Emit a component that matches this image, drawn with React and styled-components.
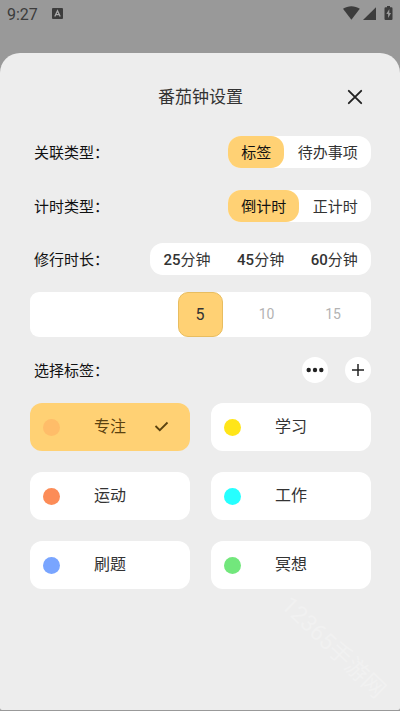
import { useState } from "react";
import styled, { createGlobalStyle } from "styled-components";

const GlobalStyle = createGlobalStyle`
  * {
    box-sizing: border-box;
  }
  body {
    margin: 0;
    background: #999;
    font-family: Roboto, "Noto Sans CJK SC", sans-serif;
    color: #333;
  }
  button {
    font: inherit;
    color: inherit;
    border: 0;
    padding: 0;
    background: none;
    cursor: pointer;
  }
`;
const Screen = styled.div`
  position: relative;
  display: flex;
  flex-direction: column;
  width: 400px;
  height: 711px;
  overflow: hidden;
  background: #999;
  padding-bottom: 1px;
`;
const StatusBar = styled.div`
  display: flex;
  align-items: flex-start;
  height: 53px;
  flex-shrink: 0;
  padding: 5px 6px 0 7px;
  color: #3c3c3c;
`;
const Time = styled.span`
  width: 45px;
  padding-top: 1px;
  font-size: 16px;
  line-height: 18px;
`;
const InputBadge = styled.svg`
  margin-top: 3px;
`;
const StatusIcons = styled.div`
  display: flex;
  margin-left: auto;
`;
const Sheet = styled.div`
  flex: 1;
  background: #ededed;
  border-radius: 20px 20px 2px 2px;
  padding: 27px 29px 0 30px;
`;
const Header = styled.div`
  display: grid;
  grid-template-columns: 1fr auto 1fr;
  align-items: center;
  height: 32px;
  margin-bottom: 24px;
`;
const Title = styled.h1`
  grid-column: 2;
  margin: 0;
  font-size: 17px;
  line-height: 34px;
  font-weight: 400;
`;
const CloseButton = styled.button`
  display: flex;
  justify-self: end;
  height: 16px;
  margin: -1px 8px 0 0;
`;
const Row = styled.div`
  display: flex;
  align-items: center;
  justify-content: space-between;
  height: 32px;
  margin-bottom: ${(props) => props.$gap || 21}px;
`;
const Label = styled.div`
  padding: 2px 0 0 4px;
  font-size: 15px;
  line-height: 32px;
  color: #111;
`;
const Segments = styled.div`
  display: flex;
  height: 32px;
  background: #fff;
  border-radius: 13px;
`;
const Segment = styled.button`
  height: 32px;
  padding: 0 13.25px;
  border-radius: 13px;
  font-size: 15px;
  line-height: 34px;
  ${(props) =>
    props.$active &&
    `
    background: #ffd174;
    color: #111;
  `}
  b {
    font-weight: 500;
  }
`;
const Picker = styled.div`
  display: flex;
  align-items: center;
  height: 45px;
  margin-bottom: 17px;
  padding-left: 148px;
  background: #fff;
  border-radius: 9px;
`;
const PickerItem = styled.button`
  flex: 0 0 45px;
  height: 45px;
  padding-right: 1px;
  border-radius: 10px;
  font-size: 14px;
  line-height: 43px;
  color: #b3b3b3;
  ${(props) =>
    props.$active &&
    `
    border: 1px solid #e8bd60;
    background: #ffd174;
    font-size: 16px;
    color: #333;
  `}
  & + & {
    margin-left: 21.5px;
  }
`;
const RoundButtons = styled.div`
  display: flex;
  gap: 17.5px;
`;
const RoundButton = styled.button`
  display: flex;
  align-items: center;
  justify-content: center;
  width: 26px;
  height: 26px;
  border-radius: 50%;
  background: #fff;
`;
const Tags = styled.div`
  display: grid;
  grid-template-columns: 160px 160px;
  gap: 21px;
`;
const Tag = styled.button`
  display: flex;
  align-items: center;
  height: 48px;
  padding: 0 21px 0 12.5px;
  border-radius: 12px;
  background: ${(props) => (props.$active ? "#ffd174" : "#fff")};
  color: ${(props) => (props.$active ? "#5a4210" : "#333")};
  font-size: 16px;
  line-height: 48px;
  svg {
    margin-left: auto;
    margin-top: -2px;
  }
`;
const Dot = styled.span`
  width: 17px;
  height: 17px;
  margin-right: 34.5px;
  border-radius: 50%;
  background: ${(props) => props.$color};
`;
const Watermark = styled.div`
  position: absolute;
  left: 333px;
  top: 648px;
  transform: translate(-50%, -50%) rotate(44deg);
  font-size: 23px;
  line-height: 28px;
  white-space: nowrap;
  color: #f1f1f1;
  pointer-events: none;
`;

const linkTypes = ["标签", "待办事项"];
const timerTypes = ["倒计时", "正计时"];
const durations = [25, 45, 60];
const minutes = [5, 10, 15];
const tags = [
  { name: "专注", color: "#ffbd69" },
  { name: "学习", color: "#ffe519" },
  { name: "运动", color: "#fc8c57" },
  { name: "工作", color: "#26ffff" },
  { name: "刷题", color: "#79a5ff" },
  { name: "冥想", color: "#72e77c" },
];

function Options({ items, value, onChange }) {
  return (
    <Segments>
      {items.map((item) => (
        <Segment
          key={item}
          $active={item === value}
          onClick={() => onChange(item)}
        >
          {item}
        </Segment>
      ))}
    </Segments>
  );
}

function Status() {
  return (
    <StatusBar>
      <Time>9:27</Time>
      <InputBadge width="11" height="11" viewBox="0 0 11 11">
        <rect width="11" height="11" rx="1" fill="#3c3c3c" />
        <path d="M2.8 8.5 5.5 2.7l2.7 5.8M3.8 6.7h3.4" fill="none" stroke="#aaa" strokeWidth="1.3" />
      </InputBadge>
      <StatusIcons>
        <svg width="51" height="16" viewBox="0 0 51 16" fill="#3c3c3c">
          <path d="M0 3.8C4.8 .3 12 .3 16.8 3.8L8.4 14.8z" />
          <path d="M33 2.2V15H20z" />
          <path d="M44 2.3V1h3v1.3h1.4q1.1 0 1.1 1.1v10.5q0 1.1-1.1 1.1h-5.8q-1.1 0-1.1-1.1V3.4q0-1.1 1.1-1.1z" />
          <path d="m46.3 4-3 5h1.8v4l3-5h-1.8z" fill="#999" />
        </svg>
      </StatusIcons>
    </StatusBar>
  );
}

export default function App() {
  const [linkType, setLinkType] = useState("标签");
  const [timerType, setTimerType] = useState("倒计时");
  const [minute, setMinute] = useState(5);
  const [tag, setTag] = useState("专注");
  return (
    <>
      <GlobalStyle />
      <Screen lang="zh-CN">
        <Status />
        <Sheet>
          <Header>
            <Title>番茄钟设置</Title>
            <CloseButton>
              <svg width="16" height="16" fill="none" stroke="#222" strokeWidth="1.9" strokeLinecap="round">
                <path d="m1.8 1.8 12.4 12.4M14.2 1.8 1.8 14.2" />
              </svg>
            </CloseButton>
          </Header>
          <Row $gap={22}>
            <Label>关联类型：</Label>
            <Options items={linkTypes} value={linkType} onChange={setLinkType} />
          </Row>
          <Row>
            <Label>计时类型：</Label>
            <Options items={timerTypes} value={timerType} onChange={setTimerType} />
          </Row>
          <Row $gap={17}>
            <Label>修行时长：</Label>
            <Segments>
              {durations.map((duration) => (
                <Segment key={duration} onClick={() => setMinute(duration)}>
                  <b>{duration}</b>分钟
                </Segment>
              ))}
            </Segments>
          </Row>
          <Picker>
            {minutes.map((item) => (
              <PickerItem
                key={item}
                $active={item === minute}
                onClick={() => setMinute(item)}
              >
                {item}
              </PickerItem>
            ))}
          </Picker>
          <Row $gap={17}>
            <Label>选择标签：</Label>
            <RoundButtons>
              <RoundButton>
                <svg width="18" height="6" fill="#222">
                  <circle cx="2.7" cy="3" r="2.2" />
                  <circle cx="9" cy="3" r="2.2" />
                  <circle cx="15.3" cy="3" r="2.2" />
                </svg>
              </RoundButton>
              <RoundButton>
                <svg width="14" height="14" stroke="#222" strokeWidth="1.5">
                  <path d="M7 1v12M1 7h12" />
                </svg>
              </RoundButton>
            </RoundButtons>
          </Row>
          <Tags>
            {tags.map(({ name, color }) => (
              <Tag key={name} $active={name === tag} onClick={() => setTag(name)}>
                <Dot $color={color} />
                {name}
                {name === tag && (
                  <svg width="15" height="11" fill="none" stroke="#5a4210" strokeWidth="1.8">
                    <path d="m1.5 5 4.3 4.2L13.5 1.5" />
                  </svg>
                )}
              </Tag>
            ))}
          </Tags>
        </Sheet>
        <Watermark>12365手游网</Watermark>
      </Screen>
    </>
  );
}
